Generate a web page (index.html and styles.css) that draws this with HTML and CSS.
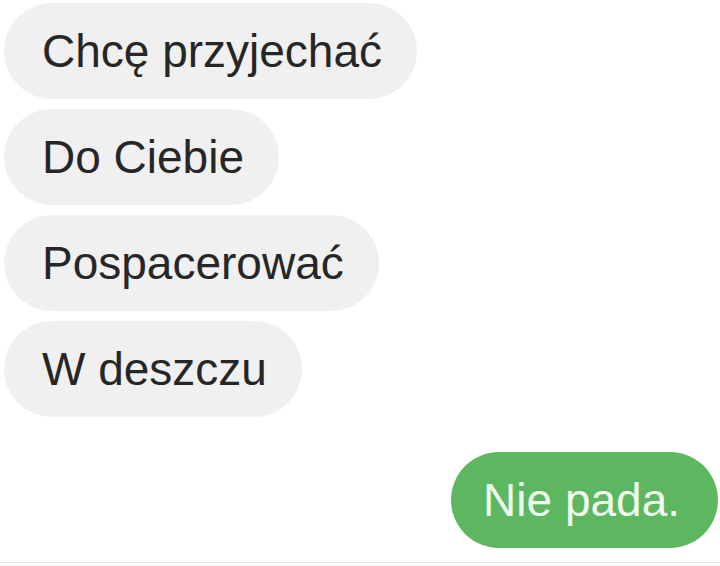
FILE: index.html
```html
<!DOCTYPE html>
<html lang="pl">
<head>
    <meta charset="UTF-8">
    <meta name="viewport" content="width=device-width, initial-scale=1.0">
    <title>Wiadomości</title>
    <link rel="stylesheet" href="styles.css">
</head>
<body>
    <div class="chat">
        <div class="msg in">Chcę przyjechać</div>
        <div class="msg in">Do Ciebie</div>
        <div class="msg in">Pospacerować</div>
        <div class="msg in">W deszczu</div>
        <div class="msg out">Nie pada.</div>
    </div>
    <div class="bottomLine"></div>
</body>
</html>
```

FILE: styles.css
```css
*{
    padding: 0;
    margin: 0;
    box-sizing: border-box;
}
body{
    width: 720px;
    height: 566px;
    background-color: #fff;
    font-family: "Liberation Sans", Arial, sans-serif;
    overflow: hidden;
}
.chat{
    display: flex;
    flex-direction: column;
    align-items: flex-start;
    padding: 3px 2px 0 4px;
    height: 562px;
}
.msg{
    height: 96px;
    line-height: 96px;
    border-radius: 48px;
    padding: 0 35px 0 38px;
    font-size: 46px;
    color: #262626;
    margin-bottom: 10px;
    white-space: nowrap;
}
.in{
    background-color: #f0f0f0;
}
.out{
    align-self: flex-end;
    margin-top: 25px;
    background-color: #5db760;
    color: #eefbee;
    padding: 0 38px 0 32px;
}
.bottomLine{
    height: 1px;
    background-color: #e4e4e4;
}
```
